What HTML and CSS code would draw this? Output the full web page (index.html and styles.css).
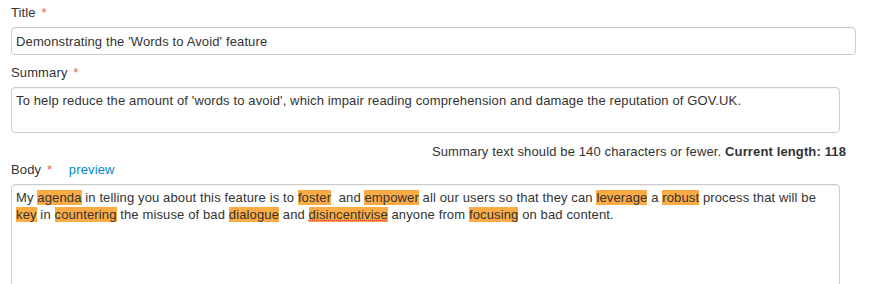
FILE: index.html
```html
<!DOCTYPE html>
<html>
<head>
  <meta charset="utf-8">
  <link rel="stylesheet" href="styles.css">
</head>
<body>
  <form class="edition-form">
    <div class="field">
      <label class="field-label">Title <span class="required">*</span></label>
      <input type="text" class="text-input" value="Demonstrating the 'Words to Avoid' feature">
    </div>

    <div class="field">
      <label class="field-label">Summary <span class="required">*</span></label>
      <div class="textarea summary-box">To help reduce the amount of 'words to avoid', which impair reading comprehension and damage the reputation of GOV.UK.</div>
      <p class="char-count">Summary text should be 140 characters or fewer. <strong>Current length: 118</strong></p>
    </div>

    <div class="field">
      <label class="field-label">Body <span class="required">*</span> <a href="#" class="preview-link">preview</a></label>
      <div class="textarea body-box">My <span class="avoid">agenda</span> in telling you about this feature is to <span class="avoid">foster</span>&nbsp; and <span class="avoid">empower</span> all our users so that they can <span class="avoid">leverage</span> a <span class="avoid">robust</span> process that will be <span class="avoid">key</span> in <span class="avoid">countering</span> the misuse of bad <span class="avoid">dialogue</span> and <span class="avoid misspelt">disincentivise</span> anyone from <span class="avoid">focusing</span> on bad content.</div>
    </div>
  </form>
</body>
</html>
```

FILE: styles.css
```css
body {
  margin: 0;
  padding: 4px 11px;
  font-family: "Liberation Sans", Arial, sans-serif;
  font-size: 13px;
  letter-spacing: 0.13px;
  line-height: 18px;
  color: #333;
  background: #fff;
}

.edition-form {
  width: 845px;
}

.field-label {
  display: block;
  margin-bottom: 5px;
}

.required {
  color: #f0623e;
  margin-left: 2px;
}

.preview-link {
  color: #0088cc;
  text-decoration: none;
  margin-left: 13px;
}

.text-input {
  box-sizing: border-box;
  display: block;
  width: 845px;
  height: 28px;
  margin: 0 0 9px 0;
  padding: 4px 4px;
  font-family: inherit;
  font-size: 13px;
  letter-spacing: inherit;
  color: #333;
  border: 1px solid #ccc;
  border-radius: 4px;
  box-shadow: inset 0 1px 1px rgba(0,0,0,0.05);
}

.textarea {
  box-sizing: border-box;
  width: 829px;
  padding: 4px 4px;
  border: 1px solid #ccc;
  border-radius: 4px;
  box-shadow: inset 0 1px 1px rgba(0,0,0,0.05);
  line-height: 17px;
}

.summary-box {
  height: 46px;
}

.char-count {
  margin: 10px 0 0 0;
  padding-right: 10px;
  text-align: right;
}

.body-box {
  height: 130px;
  padding-top: 4px;
}

.avoid {
  background: #fcab45;
}

.misspelt {
  text-decoration: underline dotted #e8402a;
}
```
